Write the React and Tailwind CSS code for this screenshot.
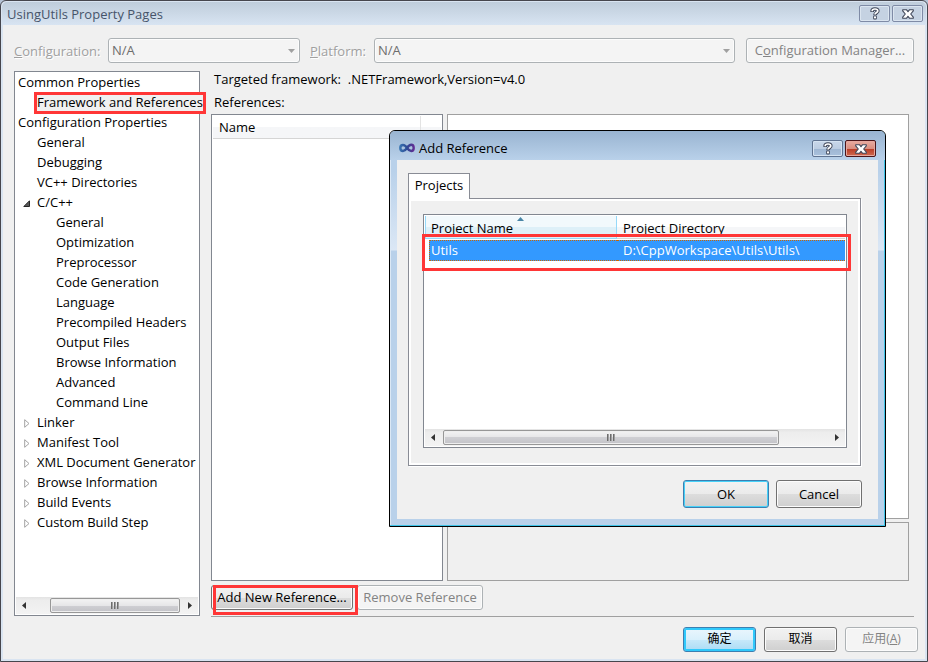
import { useState } from 'react';

const treeItems = [
  { label: 'Common Properties', level: 0 },
  { label: 'Framework and References', level: 1, selected: true },
  { label: 'Configuration Properties', level: 0 },
  { label: 'General', level: 1 },
  { label: 'Debugging', level: 1 },
  { label: 'VC++ Directories', level: 1 },
  { label: 'C/C++', level: 1, arrow: 'open' },
  { label: 'General', level: 2 },
  { label: 'Optimization', level: 2 },
  { label: 'Preprocessor', level: 2 },
  { label: 'Code Generation', level: 2 },
  { label: 'Language', level: 2 },
  { label: 'Precompiled Headers', level: 2 },
  { label: 'Output Files', level: 2 },
  { label: 'Browse Information', level: 2 },
  { label: 'Advanced', level: 2 },
  { label: 'Command Line', level: 2 },
  { label: 'Linker', level: 1, arrow: 'closed' },
  { label: 'Manifest Tool', level: 1, arrow: 'closed' },
  { label: 'XML Document Generator', level: 1, arrow: 'closed' },
  { label: 'Browse Information', level: 1, arrow: 'closed' },
  { label: 'Build Events', level: 1, arrow: 'closed' },
  { label: 'Custom Build Step', level: 1, arrow: 'closed' },
];

const projects = [{ name: 'Utils', dir: 'D:\\CppWorkspace\\Utils\\Utils\\' }];

const indent = ['pl-[2px]', 'pl-[21px]', 'pl-[40px]'];

const buttonKinds = {
  normal: 'border-[#707070] bg-[linear-gradient(#f2f2f2,#ebebeb_50%,#dddddd_50%,#cfcfcf)] text-black shadow-[inset_0_0_0_1px_#fcfcfc]',
  ok: 'border-[#3c7fb1] bg-[linear-gradient(#f2f2f2,#ebebeb_50%,#dddddd_50%,#cfcfcf)] text-black shadow-[inset_0_0_0_1px_#46d1f8]',
  hot: 'border-[#3c7fb1] bg-[linear-gradient(#eaf6fd,#d9f0fc_50%,#c8e9fa_50%,#a9dbf5)] text-black shadow-[inset_0_0_0_2px_#30c9fb]',
  disabled: 'border-[#adb2b5] bg-[#f4f4f4] text-[#838383] shadow-[inset_0_0_0_1px_#fcfcfc]',
};

function PushButton({ kind = 'normal', className = '', children, ...rest }) {
  return (
    <button
      type="button"
      disabled={kind === 'disabled'}
      className={`rounded-[3px] border pb-[1px] text-center whitespace-nowrap ${buttonKinds[kind]} ${className}`}
      {...rest}
    >
      {children}
    </button>
  );
}

function HelpIcon() {
  return (
    <svg width="10" height="13" viewBox="0 0 10 13" fill="none" aria-hidden="true">
      <path d="M2.2 5V3.8C2.2 2.6 3.4 2 5 2s2.8.6 2.8 1.9C7.8 5.6 5 5.4 5 8.2" stroke="#3f4658" strokeWidth="3.6" />
      <rect x="3.2" y="8.4" width="3.6" height="4.2" rx="1" fill="#3f4658" />
      <path d="M2.2 4.3V3.8C2.2 2.6 3.4 2 5 2s2.8.6 2.8 1.9C7.8 5.6 5 5.4 5 7.6" stroke="#fff" strokeWidth="1.7" />
      <rect x="4" y="9.4" width="2" height="2" fill="#fff" />
    </svg>
  );
}

function CloseIcon() {
  return (
    <svg width="12" height="10" viewBox="0 0 12 10" aria-hidden="true">
      <path
        d="M.7.7h3.7L6 2.7 7.6.7h3.700v1.2L8.7 5l2.600 3.1v1.2H7.6L6 7.3l-1.600 2H.7V8.1L3.3 5 .7 1.9z"
        fill="#fff"
        stroke="#3f4658"
        strokeWidth="1.1"
        strokeLinejoin="round"
      />
    </svg>
  );
}

function CaptionButtons({ active, onClose }) {
  const base = 'flex h-[17px] w-[31px] items-center justify-center rounded-[2px] border';
  const glass = active
    ? 'border-[#5f7391] bg-[linear-gradient(#c9d8ea,#bccde2_50%,#9db5d2_50%,#a9c1dd)] shadow-[inset_0_0_0_1px_#d5e3f2]'
    : 'border-[#7f8ba6] bg-[#c5d2e2] shadow-[inset_0_0_0_1px_#dbe5f0]';
  const close = active
    ? 'border-[#4a1519] bg-[linear-gradient(#e9aca1,#d98e80_50%,#b93a24_50%,#cf6a50)] shadow-[inset_0_0_0_1px_#e5a79e]'
    : glass;
  return (
    <div className="flex gap-[2px]">
      <button type="button" aria-label="Help" className={`${base} ${glass}`}><HelpIcon /></button>
      <button type="button" aria-label="Close" onClick={onClose} className={`${base} ${close}`}><CloseIcon /></button>
    </div>
  );
}

function DisabledSelect({ id, className }) {
  return (
    <div className={`relative ${className}`}>
      <select id={id} disabled className="h-[25px] w-full appearance-none rounded-[3px] border border-[#adb2b5] bg-[#f4f4f4] pb-[1px] pl-[3px] text-[#6d6d6d] opacity-100 shadow-[inset_0_0_0_1px_#fcfcfc]">
        <option>N/A</option>
      </select>
      <svg className="pointer-events-none absolute top-[11px] right-[5px]" width="7" height="4" viewBox="0 0 7 4" aria-hidden="true">
        <path d="M0 0h7L3.500 4z" fill="#a0a0a0" />
      </svg>
    </div>
  );
}

// Horizontal scrollbar, "thumb" carries the width classes of the handle
function ScrollBar({ thumb }) {
  return (
    <div className="flex h-[17px] bg-[linear-gradient(#e3e3e3,#ededed_20%,#f3f3f3)]">
      <button type="button" aria-label="Scroll left" className="flex w-[15px] shrink-0 items-center justify-center">
        <svg width="4" height="7" viewBox="0 0 4 7" aria-hidden="true"><path d="M4 0v7L0 3.500z" fill="#333" /></svg>
      </button>
      <div className="flex grow">
        <div className={`my-[1px] flex items-center justify-center gap-[1px] rounded-[2px] border border-[#979797] bg-[linear-gradient(#f3f3f3,#e6e6e8_50%,#cfcfd3_50%,#c3c3c8)] shadow-[inset_0_0_0_1px_#eeeeee] ${thumb}`}>
          <span className="h-[7px] w-[2px] bg-linear-to-r from-[#555] to-[#bbb]" />
          <span className="h-[7px] w-[2px] bg-linear-to-r from-[#555] to-[#bbb]" />
          <span className="h-[7px] w-[2px] bg-linear-to-r from-[#555] to-[#bbb]" />
        </div>
      </div>
      <button type="button" aria-label="Scroll right" className="flex w-[17px] shrink-0 items-center justify-center">
        <svg width="4" height="7" viewBox="0 0 4 7" aria-hidden="true"><path d="M0 0v7l4-3.500z" fill="#333" /></svg>
      </button>
    </div>
  );
}

function TreeArrow({ kind }) {
  if (kind === 'open') {
    return (
      <svg className="absolute top-[8px] left-[7px]" width="7" height="7" viewBox="0 0 7 7" aria-hidden="true">
        <path d="M6.500 .8v5.700H.8z" fill="#595959" stroke="#262626" strokeWidth="1" />
      </svg>
    );
  }
  return (
    <svg className="absolute top-[7px] left-[8px]" width="6" height="9" viewBox="0 0 6 9" aria-hidden="true">
      <path d="M.7 .7v7.600L5 4.500z" fill="#fff" stroke="#a3a3a3" strokeWidth="1" />
    </svg>
  );
}

function PropertyTree() {
  return (
    <nav className="mb-[1px] flex w-[186px] shrink-0 flex-col border border-[#828790] bg-white px-[1px] pb-[1px]">
      <ul className="grow">
        {treeItems.map((item, i) => (
          <li key={i} className={`relative h-5 leading-5 whitespace-nowrap ${indent[item.level]}`}>
            {item.arrow && <TreeArrow kind={item.arrow} />}
            {item.selected ? (
              <>
                <span className="inline-block bg-[#f0f0f0]">{item.label}</span>
                <span className="absolute top-0 -right-[8px] left-[18px] h-[22px] border-[3px] border-[#ff3636]" />
              </>
            ) : item.label}
          </li>
        ))}
      </ul>
      <ScrollBar thumb="ml-[19px] w-[130px]" />
    </nav>
  );
}

function LogoIcon() {
  return (
    <svg width="16" height="10" viewBox="0 0 16 10" fill="none" aria-hidden="true">
      <defs>
        <linearGradient id="vs" x1="0" y1="0" x2="16" y2="0" gradientUnits="userSpaceOnUse">
          <stop offset="0" stopColor="#3a78b4" />
          <stop offset=".5" stopColor="#2d4a94" />
          <stop offset="1" stopColor="#6a2a94" />
        </linearGradient>
      </defs>
      <path d="M8 5C6.600 2.800 5.600 2 4 2 2.400 2 1.300 3.300 1.300 5S2.400 8 4 8c1.600 0 2.800-1.200 4-3s2.400-3.200 4.200-3.200c1.500 0 2.500 1.500 2.500 3.200s-1 3-2.500 3C10.600 8 9.400 7 8 5z" stroke="url(#vs)" strokeWidth="2.400" />
    </svg>
  );
}

function AddReferenceDialog({ onClose }) {
  return (
    <div role="dialog" aria-label="Add Reference" className="absolute top-[129px] right-[41px] left-[388px] rounded-t-[6px] border border-black bg-[linear-gradient(#b9d1ea_40px,#dbe7f5_119px,#b9d1ea_120px)] shadow-[inset_-1px_-1px_0_#3fc4e8,inset_1px_1px_0_#dbe8f5]">
      <div className="flex h-[29px] items-center justify-between rounded-t-[5px] bg-linear-to-b from-[#99b4d1] to-[#b9d1ea] px-[9px]">
        <div className="flex items-center gap-1 pt-[5px]">
          <LogoIcon />
          <h2>Add Reference</h2>
        </div>
        <div className="pt-[6px]"><CaptionButtons active onClose={onClose} /></div>
      </div>
      <div className="mx-[7px] mb-[7px] bg-[#f0f0f0] px-[11px] pt-[13px] pb-[11px]">
        <button type="button" role="tab" aria-selected="true" className="relative z-10 -mb-[1px] block h-[26px] w-[62px] border border-b-0 border-[#898c95] bg-white pb-[3px]">Projects</button>
        <div className="mr-[6px] border border-[#898c95] p-[2px] shadow-[inset_0_0_0_2px_#fff,1px_1px_0_#fff]">
          <div className="mt-[13px] mr-[11px] mb-[15px] ml-[12px] flex flex-col border border-[#828790] bg-white p-[1px]">
            <table className="w-full table-fixed border-separate border-spacing-0 text-left">
              <thead>
                <tr className="h-[23px]">
                  <th className="relative w-[192px] border-x border-b border-[#96d9f9] bg-linear-to-b from-[#f2f9fc] from-50% to-[#def0f8] to-50% pt-[2px] pl-[5px] font-normal">
                    Project Name
                    <svg className="absolute top-[1px] left-[91px]" width="7" height="4" viewBox="0 0 7 4" aria-hidden="true"><path d="M0 4h7L3.500 0z" fill="#4a86a6" /></svg>
                  </th>
                  <th className="border-b border-[#d5d5d5] bg-linear-to-b from-white from-50% to-[#f5f6f8] to-50% pt-[2px] pl-[6px] font-normal">Project Directory</th>
                </tr>
              </thead>
              <tbody>
                {projects.map((p) => (
                  <tr key={p.name} className="text-white">
                    <td className="pt-[1px] pl-[4px]"><div className="h-[21px] border-y border-l border-dotted border-[#cc6600] bg-[#3399ff] pl-[1px] leading-[19px]">{p.name}</div></td>
                    <td className="pt-[1px]"><div className="h-[21px] border-y border-dotted border-[#cc6600] bg-[#3399ff] pl-[6px] leading-[19px]">{p.dir}</div></td>
                  </tr>
                ))}
              </tbody>
            </table>
            <div className="h-[168px]" />
            <ScrollBar thumb="ml-[3px] w-[336px]" />
          </div>
        </div>
        <div className="mt-[14px] mr-[5px] flex justify-end gap-[7px]">
          <PushButton kind="ok" className="h-[28px] w-[86px]" onClick={onClose}>OK</PushButton>
          <PushButton className="h-[28px] w-[86px]" onClick={onClose}>Cancel</PushButton>
        </div>
      </div>
      <span className="pointer-events-none absolute top-[103px] right-[34px] left-[32px] h-[37px] border-[3px] border-[#ff3636]" />
    </div>
  );
}

export default function App() {
  const [dialogOpen, setDialogOpen] = useState(true);

  return (
    <div className="bg-[#b5c3d6] font-['Open_Sans','Noto_Sans_CJK_SC',sans-serif] text-[13px] leading-4 text-black">
      <div className="relative flex min-h-screen flex-col rounded-t-[6px] border border-[#46464d] bg-[#d9e4f1] p-[1px]">
        <header className="flex h-[23px] items-center justify-between rounded-t-[5px] bg-linear-to-b from-[#bfcddb] to-[#d8e4f2] pr-[3px] pl-[5px]">
          <h1 className="text-[#46546a]">UsingUtils Property Pages</h1>
          <CaptionButtons onClose={() => {}} />
        </header>

        <main className="mr-[1px] mb-[1px] ml-[1px] flex grow flex-col bg-[#f0f0f0] pr-[7px] pb-[7px] pl-[11px]">
          <div className="flex items-center pt-[13px] pr-[4px]">
            <label htmlFor="configuration" className="w-[94px] text-[#a0a0a0] [text-shadow:1px_1px_0_#fff]"><u>C</u>onfiguration:</label>
            <DisabledSelect id="configuration" className="w-[192px]" />
            <label htmlFor="platform" className="ml-[10px] w-[64px] text-[#a0a0a0] [text-shadow:1px_1px_0_#fff]"><u>P</u>latform:</label>
            <DisabledSelect id="platform" className="grow" />
            <PushButton kind="disabled" className="ml-[11px] h-[25px] w-[168px]">C<u>o</u>nfiguration Manager...</PushButton>
          </div>

          <div className="mt-2 flex grow pr-[4px]">
            <PropertyTree />
            <div className="ml-[11px] flex grow flex-col border-b border-[#a0a0a0]">
              <p className="pl-[3px]">Targeted framework:&nbsp; .NETFramework,Version=v4.0</p>
              <p className="mt-[7px] pl-[3px]">References:</p>
              <div className="mt-1 mr-[5px] flex grow gap-[4px]">
                <div className="w-[232px] border border-[#828790] bg-white p-[1px]">
                  <div className="flex h-[23px] border-b border-[#d5d5d5] bg-linear-to-b from-white from-50% to-[#f5f6f8] to-50%">
                    <span className="w-[208px] border-r border-[#e3e3e3] pt-[3px] pl-[6px]">Name</span>
                  </div>
                </div>
                <div className="flex grow flex-col gap-[3px]">
                  <div className="grow border border-[#a0a0a0] bg-white" />
                  <div className="h-[59px] border border-[#a0a0a0]" />
                </div>
              </div>
              <div className="mt-1 mb-[6px] flex gap-[4px]">
                <div className="relative">
                  <PushButton className="h-[25px] w-[142px]" onClick={() => setDialogOpen(true)}>Add New Reference...</PushButton>
                  <span className="pointer-events-none absolute top-0 -right-[5px] left-[2px] h-[30px] border-[3px] border-[#ff3636]" />
                </div>
                <PushButton kind="disabled" className="h-[25px] w-[126px]">Remove Reference</PushButton>
              </div>
            </div>
          </div>

          <footer className="mt-[10px] flex justify-end gap-2">
            <PushButton kind="hot" className="h-[25px] w-[73px] text-xs">确定</PushButton>
            <PushButton className="h-[25px] w-[73px] text-xs">取消</PushButton>
            <PushButton kind="disabled" className="h-[25px] w-[73px] text-xs">应用(<u>A</u>)</PushButton>
          </footer>
        </main>

        {dialogOpen && <AddReferenceDialog onClose={() => setDialogOpen(false)} />}
      </div>
    </div>
  );
}
